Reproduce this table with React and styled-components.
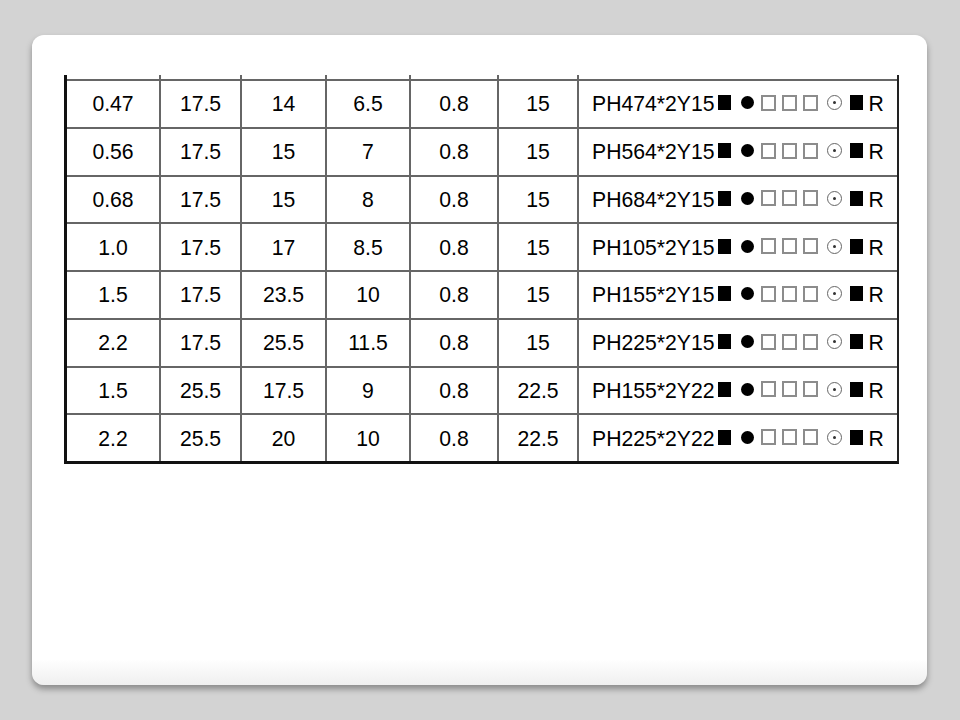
import React from 'react';
import styled, { createGlobalStyle } from 'styled-components';

const GlobalStyle = createGlobalStyle`
  body {
    margin: 0;
    background: #d3d3d3;
    font-family: "Liberation Sans", Arial, sans-serif;
  }
`;

const Page = styled.div`
  width: 960px;
  height: 720px;
  padding: 35px 0 0 32px;
  box-sizing: border-box;
`;

const Slide = styled.div`
  width: 895px;
  height: 650px;
  border-radius: 12px;
  background: linear-gradient(to bottom, #fff 0, #fff 96%, #efefef 100%);
  box-shadow: 0 4px 6px rgba(0, 0, 0, 0.35);
  padding: 40px 0 0 32px;
  box-sizing: border-box;
`;

const Table = styled.div`
  width: 835px;
  box-sizing: border-box;
  border-left: 3px solid #111;
  border-right: 2px solid #222;
  border-bottom: 3px solid #111;
  color: #000;
`;

const Row = styled.div`
  display: grid;
  grid-template-columns: 94px 81px 85px 84px 88px 80px 1fr;
  height: ${(p) => (p.$stub ? '4px' : '47.75px')};
`;

const Cell = styled.div`
  box-sizing: border-box;
  border-top: ${(p) => (p.$stub ? 'none' : '2px solid #666')};
  border-right: ${(p) => (p.$last ? 'none' : '2px solid #666')};
  display: flex;
  align-items: center;
  justify-content: ${(p) => (p.$left ? 'flex-start' : 'center')};
  padding-left: ${(p) => (p.$left ? '13px' : '0')};
  font-size: 21.2px;
  line-height: 1;
  white-space: nowrap;

  & > * {
    flex-shrink: 0;
  }
`;

const Square = styled.span`
  display: inline-block;
  width: ${(p) => (p.$filled ? 13 : 15)}px;
  height: ${(p) => (p.$filled ? 15 : 16)}px;
  box-sizing: border-box;
  margin-left: ${(p) => p.$gap}px;
  margin-bottom: 2px;
  background: ${(p) => (p.$filled ? '#000' : '#fff')};
  border: ${(p) => (p.$filled ? 'none' : '2px solid #8c8c8c')};
`;

const Dot = styled.span`
  display: inline-block;
  width: 13px;
  height: 13px;
  border-radius: 50%;
  background: #000;
  margin-left: 10px;
  margin-bottom: 2px;
`;

const Target = styled.span`
  display: inline-flex;
  align-items: center;
  justify-content: center;
  width: 15px;
  height: 15px;
  box-sizing: border-box;
  border-radius: 50%;
  border: 1.5px solid #666;
  margin-left: 9px;
  margin-bottom: 2px;

  &::after {
    content: '';
    width: 3px;
    height: 3px;
    border-radius: 50%;
    background: #333;
  }
`;

const Letter = styled.span`
  margin-left: 6px;
`;

const rows = [
  ['0.47', '17.5', '14', '6.5', '0.8', '15', 'PH474*2Y15'],
  ['0.56', '17.5', '15', '7', '0.8', '15', 'PH564*2Y15'],
  ['0.68', '17.5', '15', '8', '0.8', '15', 'PH684*2Y15'],
  ['1.0', '17.5', '17', '8.5', '0.8', '15', 'PH105*2Y15'],
  ['1.5', '17.5', '23.5', '10', '0.8', '15', 'PH155*2Y15'],
  ['2.2', '17.5', '25.5', '11.5', '0.8', '15', 'PH225*2Y15'],
  ['1.5', '25.5', '17.5', '9', '0.8', '22.5', 'PH155*2Y22'],
  ['2.2', '25.5', '20', '10', '0.8', '22.5', 'PH225*2Y22'],
];

const PartCode = ({ code }) => (
  <>
    <span>{code}</span>
    <Square $filled $gap={3} />
    <Dot />
    <Square $gap={7} />
    <Square $gap={6} />
    <Square $gap={6} />
    <Target />
    <Square $filled $gap={8} />
    <Letter>R</Letter>
  </>
);

export default function App() {
  return (
    <Page>
      <GlobalStyle />
      <Slide>
        <Table>
          <Row $stub>
            {Array.from({ length: 7 }, (_, i) => (
              <Cell key={i} $stub $last={i === 6} />
            ))}
          </Row>
          {rows.map((r, i) => (
            <Row key={i}>
              {r.slice(0, 6).map((v, j) => (
                <Cell key={j}>{v}</Cell>
              ))}
              <Cell $last $left>
                <PartCode code={r[6]} />
              </Cell>
            </Row>
          ))}
        </Table>
      </Slide>
    </Page>
  );
}
